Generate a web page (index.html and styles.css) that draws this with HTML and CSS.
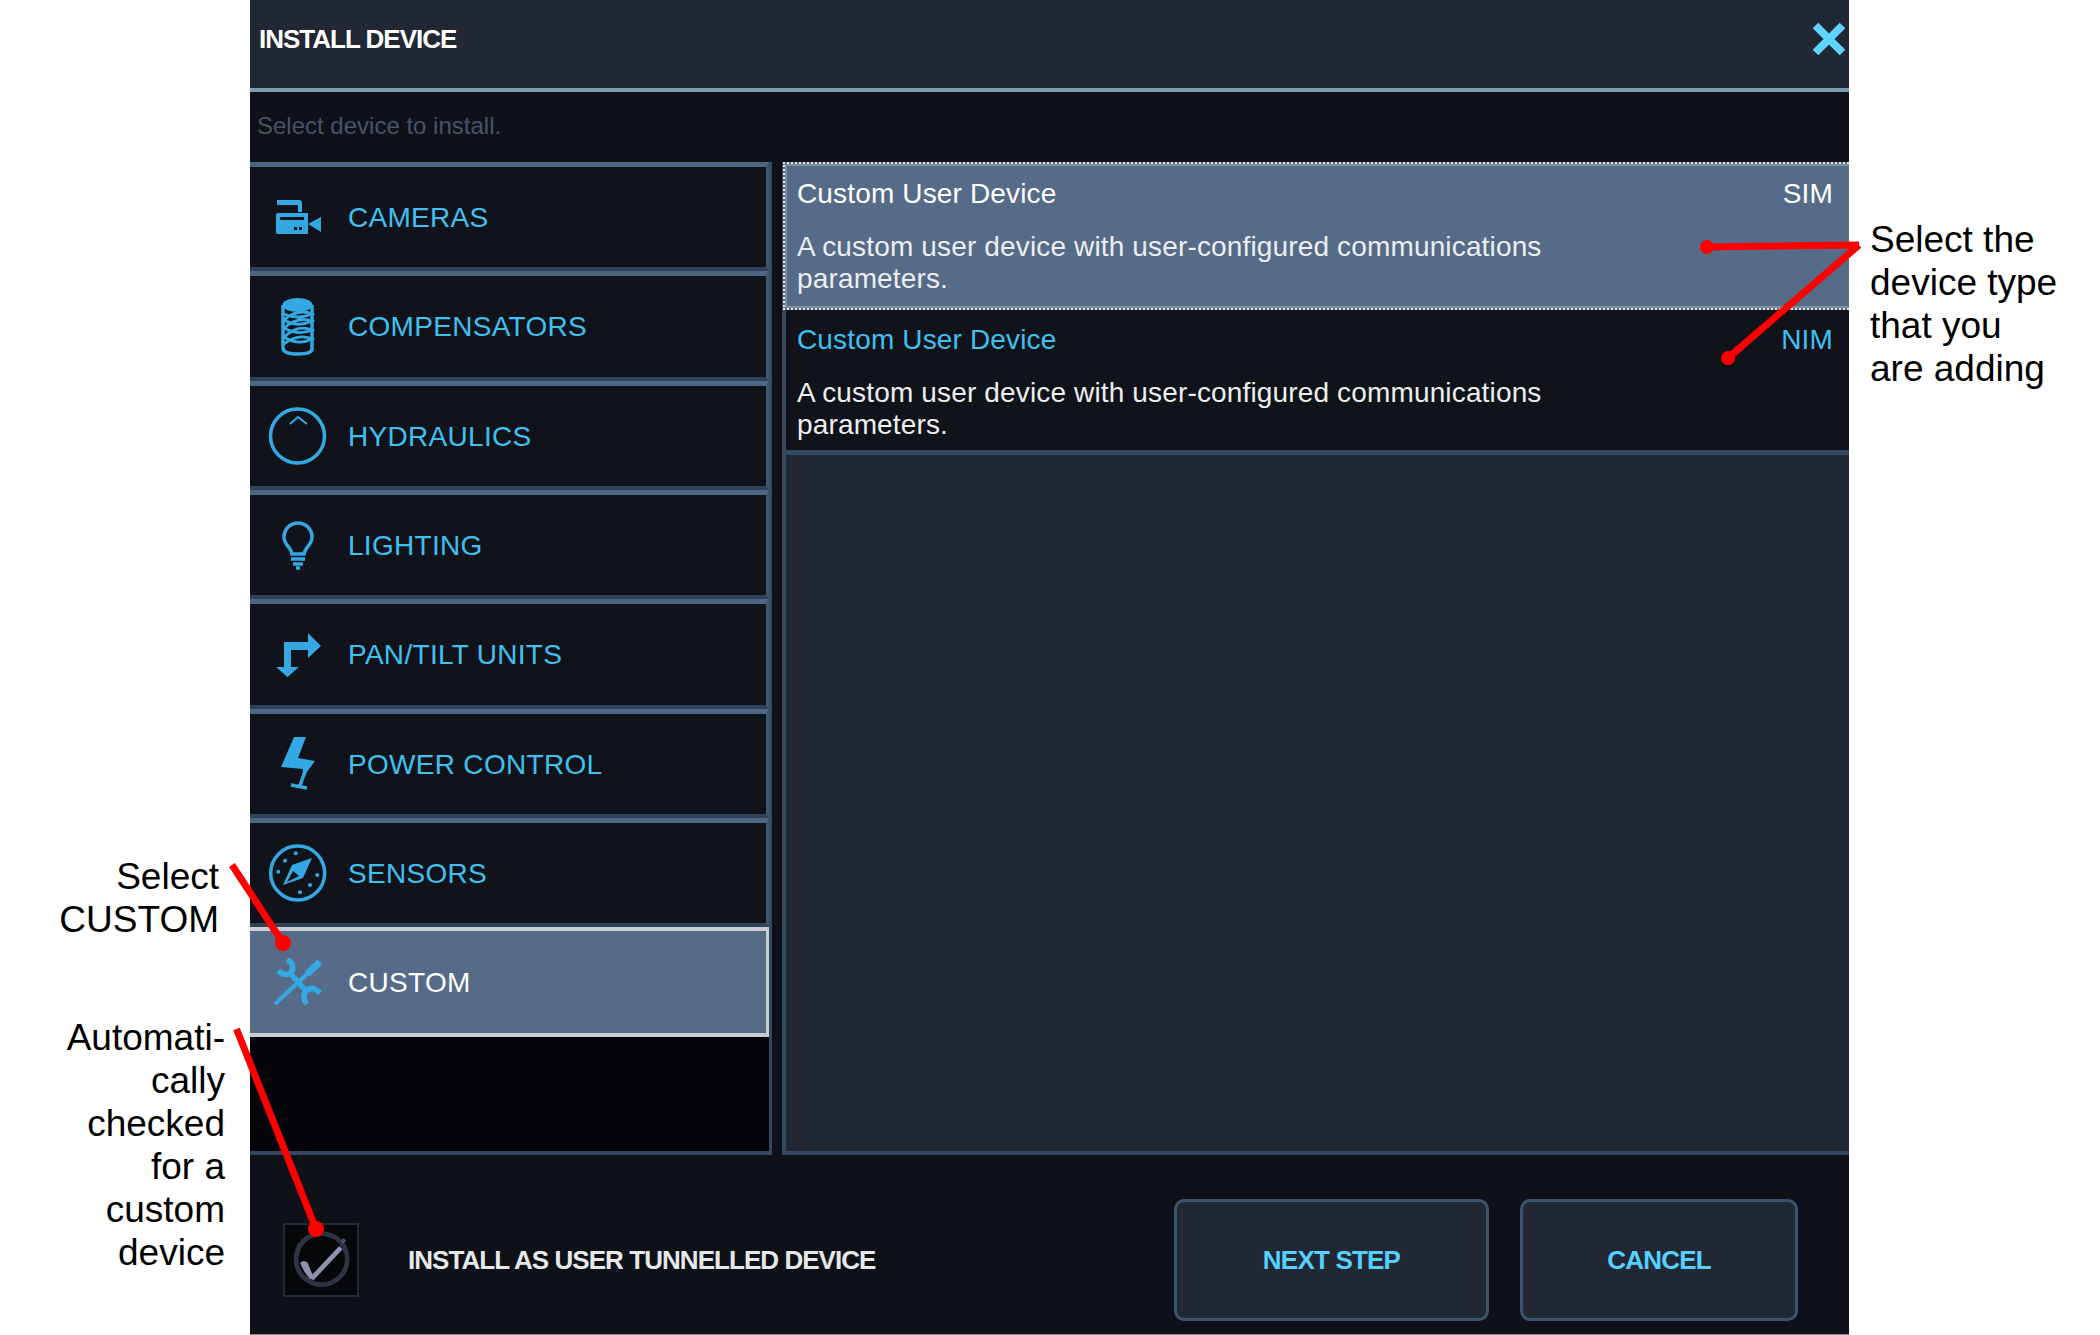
FILE: index.html
```html
<!DOCTYPE html>
<html lang="en">
<head>
<meta charset="utf-8">
<title>Install Device</title>
<link rel="stylesheet" href="styles.css">
</head>
<body>
<div class="stage">
  <aside class="gutter gutter-left">
    <p class="callout callout-custom">Select<br>CUSTOM</p>
    <p class="callout callout-auto">Automati-<br>cally<br>checked<br>for a<br>custom<br>device</p>
  </aside>

  <main class="panel">
    <header class="head">
      <h1 class="head-title">INSTALL DEVICE</h1>
      <svg class="close" viewBox="0 0 32 30"><path d="M4 3 28 27M28 3 4 27"/></svg>
    </header>
    <div class="hint">Select device to install.</div>

    <div class="body">
      <nav class="cats">
        <a class="cat">
          <svg class="ico" viewBox="0 0 48 64"><path class="f" d="M3 15H25Q28 15 28 18V27H24V21Q24 20 23 20H3Z"/><path class="f" d="M4 28H34V49H4Q2 49 2 47V30Q2 28 4 28Z"/><path class="f" d="M34 39 47 32V47Z"/><rect class="d" x="6" y="32" width="24" height="3"/><rect class="d" x="20" y="42" width="3" height="3"/><rect class="d" x="25" y="42" width="3" height="3"/></svg>
          <span>CAMERAS</span>
        </a>
        <a class="cat">
          <svg class="ico" viewBox="0 0 48 64"><path class="s" d="M9 11V54Q9 60 24 60T38 54V11"/><ellipse class="f" cx="23.500" cy="11" rx="15" ry="7"/><path class="s3" d="M10 20Q24 26 38 20Q24 14 10 26Q24 34 38 27Q24 22 10 34Q24 42 38 36Q24 30 10 43Q24 52 38 45Q24 39 10 50"/></svg>
          <span>COMPENSATORS</span>
        </a>
        <a class="cat">
          <svg class="ico" viewBox="0 0 48 64"><circle class="s" cx="23.500" cy="32" r="27"/><path class="s2" d="M16 20 24 13 33 20"/></svg>
          <span>HYDRAULICS</span>
        </a>
        <a class="cat">
          <svg class="ico" viewBox="0 0 48 64"><path class="s" d="M18 41C17 34 10 32 10 24A14 14 0 0 1 38 24C38 32 31 34 30 41Z"/><path class="s" d="M17 46H31M19 51H29"/><path class="s" d="M22 55H26"/></svg>
          <span>LIGHTING</span>
        </a>
        <a class="cat">
          <svg class="ico" viewBox="0 0 48 64"><path class="f" d="M47 24 34 11V20H10V45H2L13.500 55 25 45H17V28H34V36Z"/></svg>
          <span>PAN/TILT UNITS</span>
        </a>
        <a class="cat">
          <svg class="ico" viewBox="0 0 48 64"><path class="f" d="M20 5H32L24 26 41 29 33 40 30 46H28L29 37 7 35Z"/><path class="s" d="M31 40 25 56M17 53 33 56"/></svg>
          <span>POWER CONTROL</span>
        </a>
        <a class="cat">
          <svg class="ico" viewBox="0 0 48 64"><circle class="s" cx="23.700" cy="32" r="27"/><path class="f" d="M38 17 29 37 9 44 18 24Z"/><path class="d" d="M13 41 19 30 25 35Z"/><g class="f"><circle cx="21.700" cy="12.300" r="2"/><circle cx="11" cy="19.700" r="2"/><circle cx="4.300" cy="30.700" r="2"/><circle cx="26" cy="51.300" r="2"/><circle cx="36" cy="44" r="2"/><circle cx="43.300" cy="34" r="2"/></g></svg>
          <span>SENSORS</span>
        </a>
        <a class="cat is-on">
          <svg class="ico" viewBox="0 0 48 64"><path class="j" d="M13 10Q21 13 18 21 14 28 4 21"/><path class="j" d="M17 24 33 42"/><path class="j" d="M46 43Q38 35 32 41 27 47 33 54"/><path class="s4" d="M1 54 33 24"/><path class="w" d="M33 24 46 12"/></svg>
          <span>CUSTOM</span>
        </a>
      </nav>

      <section class="devices">
        <article class="device is-on">
          <div class="device-top"><span>Custom User Device</span><span>SIM</span></div>
          <p class="device-desc">A custom user device with user-configured communications parameters.</p>
        </article>
        <article class="device">
          <div class="device-top"><span>Custom User Device</span><span>NIM</span></div>
          <p class="device-desc">A custom user device with user-configured communications parameters.</p>
        </article>
      </section>
    </div>

    <footer class="foot">
      <span class="check">
        <svg viewBox="0 0 76 74"><circle cx="38.700" cy="36" r="27" class="check-ring"/><path class="check-tick" d="M28 57 59 24"/><path class="check-knob" d="M16 40Q20 36 24 40 26 46 30 54L27 58Q19 49 16 40Z"/><path class="check-tip" d="M63 15 60 19"/></svg>
      </span>
      <span class="foot-label">INSTALL AS USER TUNNELLED DEVICE</span>
      <button class="btn btn-next">NEXT STEP</button>
      <button class="btn btn-cancel">CANCEL</button>
    </footer>
  </main>

  <aside class="gutter gutter-right">
    <p class="callout">Select the<br>device type<br>that you<br>are adding</p>
  </aside>

  <svg class="leaders" viewBox="0 0 2100 1335">
    <path d="M1859 245 1706 247M1859 245 1728 358M232 865 283 943M236.500 1029 316 1229"/>
    <circle cx="1707" cy="247" r="7"/><circle cx="1728" cy="358" r="7"/><circle cx="283" cy="943" r="8"/><circle cx="316" cy="1229" r="8"/>
  </svg>
</div>
</body>
</html>
```
FILE: styles.css
```css
* { box-sizing: border-box; }
html, body { margin: 0; height: 100%; background: #fff; overflow: hidden; }
body { font-family: "Liberation Sans", Arial, sans-serif; }

.stage { position: relative; display: flex; width: 2100px; height: 1335px; }

.gutter { color: #000; }
.gutter-left { width: 250px; padding-top: 855px; text-align: right; }
.gutter-right { flex: 1; padding: 218px 0 0 21px; }
.callout { margin: 0; font-size: 37px; line-height: 43px; }
.callout-custom { padding-right: 31px; }
.callout-auto { margin-top: 75px; padding-right: 25px; }

.leaders { position: absolute; inset: 0; width: 2100px; height: 1335px; pointer-events: none; }
.leaders path { fill: none; stroke: #f00; stroke-width: 7; }
.leaders circle { fill: #f00; }

.panel { display: flex; flex-direction: column; width: 1599px; height: 1335px; background: #0e1118; border-bottom: 1px solid #8a8a8a; }

.head { display: flex; align-items: center; justify-content: space-between; flex: none; height: 92px; padding: 0 2px 10px 9px; background: #212833; border-bottom: 4px solid #7d9bb5; }
.head-title { margin: 0; color: #fff; font-size: 26px; font-weight: 700; letter-spacing: -1px; }
.close { width: 36px; height: 34px; }
.close path { fill: none; stroke: #5fd4ff; stroke-width: 7; }

.hint { flex: none; height: 70px; padding: 20px 0 0 7px; color: #465467; font-size: 24px; line-height: 28px; }

.body { display: flex; flex: none; height: 993px; }

.cats { display: grid; grid-auto-rows: 109.33px; width: 522px; background: #02040a; border-right: 3px solid #33475f; border-bottom: 4px solid #33475f; }
.cat { display: flex; align-items: center; gap: 26px; padding-left: 24px; background: #10131a; border: solid #2f4158; border-width: 5px 3px 4px 0; border-top-color: #4d6681; border-right-color: #3f566f; color: #41c0f0; font-size: 28px; letter-spacing: 0.300px; line-height: 34px; }
.cat span { position: relative; top: 1px; }
.cat.is-on { background: #566b88; border-color: #c9ccd0; border-width: 4px 3px 4px 0; color: #fff; }

.ico { flex: none; width: 48px; height: 64px; overflow: visible; }
.ico .f { fill: #33a8e2; }
.ico .d { fill: #10131a; }
.ico .s { fill: none; stroke: #33a8e2; stroke-width: 3.500; }
.ico .s2 { fill: none; stroke: #33a8e2; stroke-width: 2; }
.ico .s3 { fill: none; stroke: #33a8e2; stroke-width: 2.800; }
.ico .s4 { fill: none; stroke: #33a8e2; stroke-width: 4; }
.ico .w { fill: none; stroke: #33a8e2; stroke-width: 7; }
.ico .j { fill: none; stroke: #33a8e2; stroke-width: 5.500; }

.devices { flex: 1; margin-left: 10px; background: #212833; border-left: 4px solid #34495f; border-bottom: 4px solid #34495f; }
.device { height: 145px; padding: 14px 16px 0 11px; background: #10131a; border-bottom: 5px solid #33475f; color: #41c0f0; }
.device.is-on { height: 148px; padding: 14px 16px 0 12px; background: #566b88; border: 2px dotted #e4e6e8; border-right: 0; box-shadow: inset 0 2px 0 #7d8fa3, inset 0 -2px 0 #7d8fa3, inset 2px 0 0 #7d8fa3; margin-left: -3px; color: #fff; }
.device-top { display: flex; justify-content: space-between; font-size: 28px; line-height: 32px; letter-spacing: 0.150px; }
.device-desc { width: 760px; margin: 21px 0 0; color: #eceef0; font-size: 28px; line-height: 32px; letter-spacing: 0.150px; }

.foot { display: flex; align-items: center; flex: 1; padding: 44px 51px 13px 33px; }
.check { flex: none; width: 76px; height: 74px; background: #060709; border: 2px solid #1f2a36; }
.check svg { display: block; width: 72px; height: 70px; overflow: visible; }
.check-ring { fill: none; stroke: #2f3445; stroke-width: 5; }
.check-tick { fill: none; stroke: #8e92ab; stroke-width: 5; }
.check-knob { fill: #8e92ab; }
.check-tip { fill: none; stroke: #4b5066; stroke-width: 4; }
.foot-label { flex: 1; margin-left: 49px; color: #e6e8ea; font-size: 26px; font-weight: 700; letter-spacing: -0.950px; }

.btn { flex: none; height: 122px; padding: 0; background: #212833; border: 3px solid #3c5470; border-radius: 10px; color: #55d0ff; font-family: inherit; font-size: 26px; font-weight: 700; letter-spacing: -0.800px; }
.btn-next { width: 315px; }
.btn-cancel { width: 278px; margin-left: 31px; }
```
